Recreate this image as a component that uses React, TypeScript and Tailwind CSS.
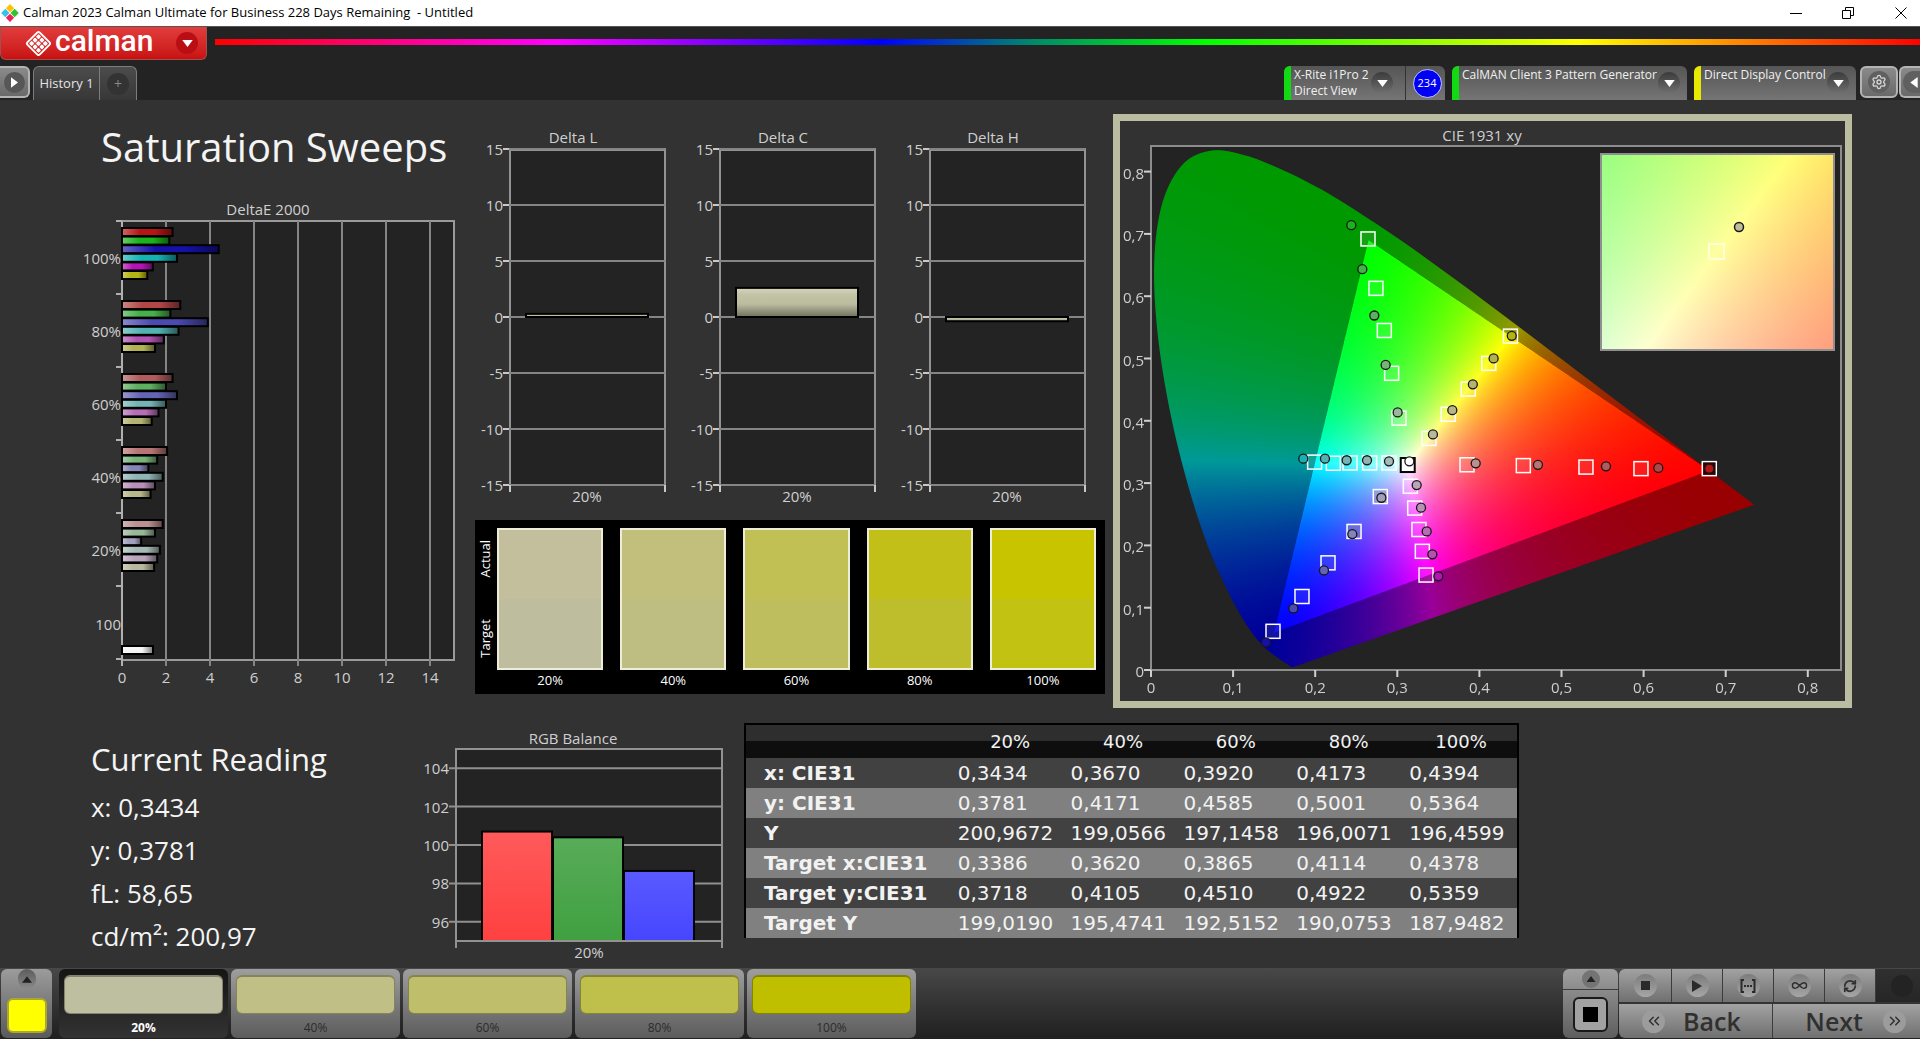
import { useEffect, useRef } from 'react';
import type { ReactNode } from 'react';
import { ChevronsLeft, ChevronsRight, Infinity as InfinityIcon, RefreshCw, Settings } from 'lucide-react';

const levels = ['20%', '40%', '60%', '80%', '100%'];

const deltaE = [
  {
    label: '100%',
    values: [2.3, 2.15, 4.4, 2.5, 1.4, 1.15],
    colors: ['#b81414', '#1cb41c', '#1410a8', '#14b4b4', '#b414b4', '#b4b414'],
  },
  {
    label: '80%',
    values: [2.65, 2.2, 3.9, 2.57, 1.9, 1.5],
    colors: ['#b04646', '#46b04c', '#4a4ab0', '#52b2b2', '#b252b2', '#b2b252'],
  },
  {
    label: '60%',
    values: [2.3, 2.0, 2.5, 2.0, 1.66, 1.35],
    colors: ['#b05c5c', '#5cb060', '#6464b4', '#74b4b4', '#b66eb6', '#b4b470'],
  },
  {
    label: '40%',
    values: [2.05, 1.6, 1.2, 1.85, 1.5, 1.3],
    colors: ['#b87474', '#78b47a', '#8484b8', '#90b4b4', '#b890b8', '#b6b68a'],
  },
  {
    label: '20%',
    values: [1.85, 1.5, 0.87, 1.72, 1.6, 1.46],
    colors: ['#ba9090', '#98b89a', '#a0a0bc', '#a8bab8', '#baa4ba', '#b8b89c'],
  },
];

const deltas = [
  { title: 'Delta L', value: 0.28 },
  { title: 'Delta C', value: 2.6 },
  { title: 'Delta H', value: -0.38 },
];

const swatches = [
  { label: '20%', actual: '#c3be9b', target: '#bebe9f' },
  { label: '40%', actual: '#c1bf7b', target: '#bebe82' },
  { label: '60%', actual: '#c1c055', target: '#bebe5f' },
  { label: '80%', actual: '#c2c018', target: '#bebe2d' },
  { label: '100%', actual: '#c8c400', target: '#c2c212' },
];

const rgbBars = [
  { value: 100.7, from: '#ff5a5a', to: '#ff4040' },
  { value: 100.4, from: '#58ac58', to: '#40a040' },
  { value: 98.65, from: '#5a5aff', to: '#4646ff' },
];

const readings = ['x: 0,3434', 'y: 0,3781', 'fL: 58,65', 'cd/m²: 200,97'];

const tableRows = [
  { label: 'x: CIE31', values: ['0,3434', '0,3670', '0,3920', '0,4173', '0,4394'] },
  { label: 'y: CIE31', values: ['0,3781', '0,4171', '0,4585', '0,5001', '0,5364'] },
  { label: 'Y', values: ['200,9672', '199,0566', '197,1458', '196,0071', '196,4599'] },
  { label: 'Target x:CIE31', values: ['0,3386', '0,3620', '0,3865', '0,4114', '0,4378'] },
  { label: 'Target y:CIE31', values: ['0,3718', '0,4105', '0,4510', '0,4922', '0,5359'] },
  { label: 'Target Y', values: ['199,0190', '195,4741', '192,5152', '190,0753', '187,9482'] },
];

const levelTiles = ['#bebfa1', '#bfbf86', '#bfbf6b', '#bfbf4b', '#bfbf00'];

type Point = [number, number];

// each sweep runs from 100% down to 20% saturation
const sweeps: { color: number; targets: Point[]; actual: Point[] }[] = [
  {
    color: 0,
    targets: [[0.68, 0.3232], [0.5968, 0.3232], [0.5298, 0.3257], [0.4535, 0.3281], [0.3849, 0.3294]],
    actual: [[0.68, 0.3232], [0.6179, 0.3244], [0.5542, 0.3269], [0.4713, 0.3294], [0.3955, 0.3318]],
  },
  {
    color: 1,
    targets: [[0.2643, 0.6919], [0.274, 0.6126], [0.2842, 0.545], [0.2931, 0.4762], [0.3021, 0.4043]],
    actual: [[0.244, 0.714], [0.2574, 0.6434], [0.272, 0.569], [0.2858, 0.4897], [0.3004, 0.4135]],
  },
  {
    color: 2,
    targets: [[0.1486, 0.0621], [0.1839, 0.118], [0.2156, 0.172], [0.2473, 0.2224], [0.2793, 0.2784]],
    actual: [[0.1401, 0.0442], [0.1734, 0.0989], [0.2107, 0.1598], [0.2452, 0.2181], [0.2806, 0.2765]],
  },
  {
    color: 3,
    targets: [[0.1993, 0.3337], [0.2221, 0.3318], [0.2424, 0.3324], [0.2663, 0.3324], [0.2899, 0.3324]],
    actual: [[0.1855, 0.3392], [0.2119, 0.3392], [0.2383, 0.3367], [0.2631, 0.3367], [0.2899, 0.3349]],
  },
  {
    color: 4,
    targets: [[0.335, 0.1524], [0.3305, 0.1905], [0.3264, 0.2255], [0.3212, 0.2599], [0.3159, 0.295]],
    actual: [[0.35, 0.1505], [0.3427, 0.1856], [0.3358, 0.2224], [0.3289, 0.2605], [0.3236, 0.2968]],
  },
  {
    color: 5,
    targets: [[0.4378, 0.5359], [0.4114, 0.4922], [0.3865, 0.451], [0.362, 0.4105], [0.3386, 0.3718]],
    actual: [[0.4394, 0.5364], [0.4173, 0.5001], [0.392, 0.4585], [0.367, 0.4171], [0.3434, 0.3781]],
  },
];

const locus: Point[] = [
  [0.1741, 0.005], [0.1714, 0.0051], [0.1644, 0.0109], [0.1566, 0.0177], [0.144, 0.0297], [0.1355, 0.0399],
  [0.1241, 0.0578], [0.1096, 0.0868], [0.0913, 0.1327], [0.0687, 0.2007], [0.0454, 0.295], [0.0235, 0.4127],
  [0.0082, 0.5384], [0.0039, 0.6548], [0.0139, 0.7502], [0.0389, 0.812], [0.0743, 0.8338], [0.1142, 0.8262],
  [0.1547, 0.8059], [0.1929, 0.7816], [0.2296, 0.7543], [0.3016, 0.6923], [0.3731, 0.6245], [0.4441, 0.5547],
  [0.5125, 0.4866], [0.5752, 0.4242], [0.627, 0.3725], [0.6658, 0.334], [0.6915, 0.3083], [0.719, 0.2809],
  [0.7347, 0.2653],
];

// chromaticity to P3 RGB, scaled to full brightness; colours outside the gamut are dimmed
const colorAt = (x: number, y: number) => {
  const X = x / y;
  const Z = (1 - x - y) / y;
  const rgb = [
    2.4935 * X - 0.9314 - 0.4027 * Z,
    -0.8295 * X + 1.7627 + 0.0236 * Z,
    0.0358 * X - 0.0762 + 0.9569 * Z,
  ];
  const max = Math.max(...rgb);
  const level = Math.min(...rgb) < 0 ? 153 : 255;
  return rgb.map((v) => Math.pow(Math.max(v, 0) / max, 1.25) * level);
};

type GamutProps = { width: number; height: number; x0: number; x1: number; y0: number; y1: number; clip?: boolean };

const GamutCanvas = ({ width, height, x0, x1, y0, y1, clip }: GamutProps) => {
  const ref = useRef<HTMLCanvasElement>(null);

  useEffect(() => {
    const ctx = ref.current?.getContext('2d');
    if (!ctx) return;
    const image = ctx.createImageData(width, height);
    for (let j = 0; j < height; j++) {
      for (let i = 0; i < width; i++) {
        const x = x0 + ((x1 - x0) * (i + 0.5)) / width;
        const y = y1 - ((y1 - y0) * (j + 0.5)) / height;
        const [r, g, b] = colorAt(x, y);
        image.data.set([r, g, b, 255], (j * width + i) * 4);
      }
    }
    ctx.putImageData(image, 0, 0);
    if (!clip) return;

    const px = ([x, y]: Point): Point => [
      ((x - x0) / (x1 - x0)) * width,
      ((y1 - y) / (y1 - y0)) * height,
    ];
    ctx.globalCompositeOperation = 'destination-in';
    ctx.beginPath();
    ctx.moveTo(...px(locus[0]));
    for (let i = 0; i < locus.length - 1; i++) {
      // Catmull-Rom segment written as a cubic
      const [ax, ay] = px(locus[Math.max(i - 1, 0)]);
      const [bx, by] = px(locus[i]);
      const [cx, cy] = px(locus[i + 1]);
      const [dx, dy] = px(locus[Math.min(i + 2, locus.length - 1)]);
      ctx.bezierCurveTo(bx + (cx - ax) / 6, by + (cy - ay) / 6, cx - (dx - bx) / 6, cy - (dy - by) / 6, cx, cy);
    }
    ctx.closePath();
    ctx.fill();
    ctx.globalCompositeOperation = 'source-over';
  }, [width, height, x0, x1, y0, y1, clip]);

  return <canvas ref={ref} width={width} height={height} className="block w-full h-full" />;
};

const chartText = 'fill-[#cfcfcf] text-[15px]';

const DeltaEChart = () => {
  const left = 42;
  const top = 21;
  const unit = 22;
  const group = 73;
  return (
    <svg viewBox="0 0 380 490" className="block w-full h-auto">
      <defs>
        <linearGradient id="barShade" x1="0" x2="1" y1="0" y2="0">
          <stop offset="0" stopColor="#fff" stopOpacity="0.35" />
          <stop offset="0.35" stopColor="#fff" stopOpacity="0" />
          <stop offset="0.65" stopColor="#000" stopOpacity="0" />
          <stop offset="1" stopColor="#000" stopOpacity="0.5" />
        </linearGradient>
      </defs>
      <text x="188" y="15" textAnchor="middle" className={chartText}>DeltaE 2000</text>
      <rect x={left} y={top} width={332} height={439} fill="#232323" stroke="#9a9a9a" strokeWidth="2" />
      {[2, 4, 6, 8, 10, 12, 14].map((v) => (
        <line key={v} x1={left + v * unit} x2={left + v * unit} y1={top} y2={466} stroke="#858585" strokeWidth="2" />
      ))}
      <line x1={left} x2={left} y1={top} y2={466} stroke="#b0b0b0" strokeWidth="2" />
      {[0, 1, 2, 3, 4, 5, 6].map((i) => (
        <line key={i} x1={left - 6} x2={left} y1={top + i * group} y2={top + i * group} stroke="#b0b0b0" strokeWidth="2" />
      ))}
      {[0, 2, 4, 6, 8, 10, 12, 14].map((v) => (
        <text key={v} x={left + v * unit} y="483" textAnchor="middle" className={chartText}>{v}</text>
      ))}
      {deltaE.map((g, i) => (
        <g key={g.label}>
          <text x={left - 1} y={top + i * group + 43} textAnchor="end" className={chartText}>{g.label}</text>
          {g.values.map((v, j) => {
            const y = top + i * group + 7 + j * 8.6;
            return (
              <g key={j}>
                <rect x={left} y={y} width={v * unit} height={8} fill={g.colors[j]} />
                <rect x={left} y={y} width={v * unit} height={8} fill="url(#barShade)" stroke="#000" strokeWidth="2" />
              </g>
            );
          })}
        </g>
      ))}
      <text x={left - 1} y={top + 5 * group + 44} textAnchor="end" className={chartText}>100</text>
      <rect x={left} y={446} width={31} height={8} fill="#f6f6f6" />
      <rect x={left} y={446} width={31} height={8} fill="url(#barShade)" stroke="#000" strokeWidth="2" />
    </svg>
  );
};

const DeltaChart = ({ title, value }: { title: string; value: number }) => {
  const left = 35;
  const yOf = (v: number) => 190 - v * 11.2;
  return (
    <svg viewBox="0 0 210 384" className="block w-full h-auto">
      <defs>
        <linearGradient id="deltaShade" x1="0" x2="0" y1="0" y2="1">
          <stop offset="0" stopColor="#d4d5bc" />
          <stop offset="0.25" stopColor="#c2c3a4" />
          <stop offset="0.55" stopColor="#bcbda0" />
          <stop offset="1" stopColor="#6f705e" />
        </linearGradient>
      </defs>
      <text x="98" y="16" textAnchor="middle" className={chartText}>{title}</text>
      <rect x={left} y={22} width={155} height={336} fill="#232323" stroke="#929292" strokeWidth="2" />
      <rect x={left - 1} y={21} width={157} height={3} fill="#929292" />
      {[15, 10, 5, 0, -5, -10, -15].map((v) => (
        <g key={v}>
          <line x1={left - 7} x2={left + 155} y1={yOf(v)} y2={yOf(v)} stroke="#858585" strokeWidth="2" />
          <line x1={left - 7} x2={left - 1} y1={yOf(v)} y2={yOf(v)} stroke="#c8c8c8" strokeWidth="2" />
          <text x={left - 7} y={yOf(v) + 6} textAnchor="end" className={chartText}>{v}</text>
        </g>
      ))}
      <path d="M35 358v7M190 358v7" stroke="#c8c8c8" strokeWidth="2" />
      <rect
        x={left + 16}
        y={Math.min(yOf(value), yOf(0))}
        width={122}
        height={Math.abs(value) * 11.2}
        fill="url(#deltaShade)"
        stroke="#000"
        strokeWidth="2"
      />
      <text x="112" y="375" textAnchor="middle" className={chartText}>20%</text>
    </svg>
  );
};

const RgbBalance = () => {
  const left = 41;
  const yOf = (v: number) => 210 - (v - 95) * 19.2;
  return (
    <svg viewBox="0 0 329 235" className="block w-full h-auto">
      <defs>
        {rgbBars.map((b, i) => (
          <linearGradient key={i} id={`rgb${i}`} x1="0" x2="0" y1="0" y2="1">
            <stop offset="0" stopColor={b.from} />
            <stop offset="1" stopColor={b.to} />
          </linearGradient>
        ))}
      </defs>
      <text x="158" y="13" textAnchor="middle" className={chartText}>RGB Balance</text>
      <rect x={left} y={18} width={266} height={192} fill="#232323" stroke="#929292" strokeWidth="2" />
      {[104, 102, 100, 98, 96].map((v) => (
        <g key={v}>
          <line x1={left - 7} x2={left + 266} y1={yOf(v)} y2={yOf(v)} stroke="#909090" strokeWidth="2" />
          <text x={left - 7} y={yOf(v) + 6} textAnchor="end" className={chartText}>{v}</text>
        </g>
      ))}
      {rgbBars.map((b, i) => (
        <rect
          key={i}
          x={left + 26 + i * 71}
          y={yOf(b.value)}
          width={70}
          height={210 - yOf(b.value)}
          fill={`url(#rgb${i})`}
          stroke="#000"
          strokeWidth="2"
        />
      ))}
      <path d="M41 217V18M307 217V18M40 210h268" stroke="#929292" strokeWidth="2" />
      <text x="174" y="227" textAnchor="middle" className={chartText}>20%</text>
    </svg>
  );
};

const CieChart = () => {
  const left = 31;
  const bottom = 549;
  const xOf = (x: number) => left + x * 821;
  const yOf = (y: number) => bottom - y * 623;
  return (
    <svg viewBox="0 0 725 580" className="block w-full h-auto">
      <text x="362" y="20" textAnchor="middle" className={chartText}>CIE 1931 xy</text>
      <rect x={left} y={25} width={690} height={524} fill="#232323" />
      <foreignObject x={left} y={25} width={690} height={524}>
        <GamutCanvas width={1380} height={1048} x0={0} x1={690 / 821} y0={0} y1={524 / 623} clip />
      </foreignObject>
      <rect x={left} y={25} width={690} height={524} fill="none" stroke="#8c8c8c" strokeWidth="2" />
      {[0, 1, 2, 3, 4, 5, 6, 7, 8].map((n) => {
        const label = n === 0 ? '0' : `0,${n}`;
        return (
          <g key={n} stroke="none">
            <rect x={xOf(n / 10) - 1} y={bottom} width={2} height={7} fill="#cfcfcf" />
            <rect x={left - 7} y={yOf(n / 10) - 1} width={7} height={2} fill="#cfcfcf" />
            <text x={xOf(n / 10)} y={572} textAnchor="middle" className={chartText}>{label}</text>
            <text x={left - 7} y={yOf(n / 10) + 7} textAnchor="end" className={chartText}>{label}</text>
          </g>
        );
      })}
      {sweeps.map((s) =>
        s.targets.map(([x, y], i) => (
          <rect
            key={`${s.color}-${i}`}
            x={xOf(x) - 7}
            y={yOf(y) - 7}
            width={14}
            height={14}
            fill={s.color === 2 && i > 2 ? deltaE[i].colors[2] : '#fff'}
            fillOpacity={s.color === 2 && i > 2 ? 0.5 : 0.08}
            stroke="#fff"
            strokeWidth="1.5"
          />
        ))
      )}
      <rect x={xOf(0.68) - 6} y={yOf(0.3232) - 6} width={12} height={12} fill="#300000" />
      <rect x={xOf(0.3127) - 7} y={yOf(0.329) - 7} width={14} height={14} fill="#fff" stroke="#000" strokeWidth="2" />
      {sweeps.map((s) =>
        s.actual.map(([x, y], i) => (
          <circle
            key={`${s.color}-${i}`}
            cx={xOf(x)}
            cy={yOf(y)}
            r={4.5}
            fill={deltaE[i].colors[s.color]}
            stroke="#181818"
            strokeWidth="1.3"
          />
        ))
      )}
      <circle cx={xOf(0.3147)} cy={yOf(0.3349)} r={4.5} fill="#fff" stroke="#181818" strokeWidth="1.3" />

      {/* magnified view round the current reading */}
      <foreignObject x={482} y={34} width={232} height={195}>
        <GamutCanvas width={466} height={392} x0={0.3143} x1={0.3629} y0={0.3466} y1={0.397} />
      </foreignObject>
      <rect x={481} y={33} width={233} height={196} fill="none" stroke="#8f8f8f" strokeWidth="2" />
      <rect x={589} y={123} width={15} height={15} fill="none" stroke="#ffffd8" strokeWidth="2" />
      <circle cx={619} cy={106} r={4.5} fill="#bebe9f" stroke="#181818" strokeWidth="1.5" />
    </svg>
  );
};

const ArrowCircle = () => (
  <span className="flex items-center justify-center w-[22px] h-[22px] shrink-0 rounded-full bg-linear-to-b from-[#3c3c3c] to-[#707070]">
    <svg viewBox="0 0 12 8" className="w-[11px] h-[7px]"><path d="M0 0h12L6 8z" fill="#fff" /></svg>
  </span>
);

const SourceMenu = ({ lines, strip, className }: { lines: string[]; strip: string; className: string }) => (
  <button
    className={`flex h-[34px] overflow-hidden rounded-t-md bg-linear-to-b from-[#555] to-[#757575] text-left text-[#f0f0f0] text-[12px] leading-4 ${className}`}
  >
    <span className={`w-[7px] h-full shrink-0 ${strip}`} />
    <span className="flex-1 pl-[3px] pt-px whitespace-nowrap">
      {lines.map((l) => <span key={l} className="block">{l}</span>)}
    </span>
    <span className="self-center"><ArrowCircle /></span>
  </button>
);

const RoundButton = ({ label, className, children }: { label: string; className?: string; children?: ReactNode }) => (
  <button
    aria-label={label}
    className={`flex items-center justify-center h-[33px] bg-linear-to-b from-[#a2a2a2] to-[#707070] border-r border-[#3c3c3c] ${className ?? 'w-[51px]'}`}
  >
    <span className="flex items-center justify-center w-[23px] h-[23px] rounded-full bg-linear-to-b from-[#7c7c7c] to-[#a6a6a6] text-[#303030]">
      {children}
    </span>
  </button>
);

const TitleBar = () => (
  <div className="flex items-center h-[26px] bg-white text-black text-[13px] pl-px">
    <svg viewBox="0 0 20 20" className="w-[18px] h-[18px] mr-1">
      <path d="M10 0l4.6 4.6L10 9.200 5.400 4.600z" fill="#ffc400" />
      <path d="M4.800 5.400l4.600 4.600-4.600 4.600L.2 10z" fill="#35c0ee" />
      <path d="M15.200 5.400l4.600 4.600-4.600 4.600L10.600 10z" fill="#2fc42f" />
      <path d="M10 10.800l4.600 4.600L10 20l-4.600-4.600z" fill="#ec2258" />
    </svg>
    <span className="whitespace-pre">Calman 2023 Calman Ultimate for Business 228 Days Remaining  - Untitled</span>
    <div className="ml-auto flex">
      <button aria-label="Minimize" className="flex items-center justify-center w-[52px] h-[26px]">
        <svg viewBox="0 0 12 12" className="w-3 h-3"><path d="M0 6.500h12" stroke="#000" /></svg>
      </button>
      <button aria-label="Restore" className="flex items-center justify-center w-[52px] h-[26px]">
        <svg viewBox="0 0 12 12" className="w-3 h-3">
          <path d="M.5 3.500h8v8h-8zM3.500 3.500v-3h8v8h-3" fill="none" stroke="#000" />
        </svg>
      </button>
      <button aria-label="Close" className="flex items-center justify-center w-[46px] h-[26px] pl-[8px]">
        <svg viewBox="0 0 12 12" className="w-3 h-3"><path d="M.5.5l11 11M11.500.5l-11 11" stroke="#000" /></svg>
      </button>
    </div>
  </div>
);

const Header = () => (
  <header className="bg-[#232323] h-[74px] flex flex-col justify-between border-t border-[#555]">
    <div className="flex">
      <button
        aria-label="Calman menu"
        className="flex items-center w-[207px] h-[33px] pl-[24px] rounded-b-md border border-t-0 border-[#a05050] bg-linear-to-b from-[#e23c3c] to-[#c81010] text-white"
      >
        <svg viewBox="0 0 28 28" className="w-[27px] h-[27px]">
          <g transform="rotate(45 14 14)">
            <rect x="5" y="5" width="18" height="18" rx="2" fill="none" stroke="#fff" strokeWidth="2" />
            {[7, 12, 17].map((x) =>
              [7, 12, 17].map((y) => <rect key={`${x}${y}`} x={x} y={y} width="4" height="4" rx="1" fill="#fff" />)
            )}
          </g>
        </svg>
        <span className="ml-[3px] font-[Roboto] font-medium text-[30px] leading-[30px] pb-1">calman</span>
        <span className="ml-auto mr-[8px] flex items-center justify-center w-[22px] h-[22px] rounded-full bg-[#b90f14]">
          <svg viewBox="0 0 12 8" className="w-[11px] h-[7px]"><path d="M0 0h12L6 8z" fill="#fff" /></svg>
        </span>
      </button>
      <div className="flex-1 ml-2 mt-[12px] h-[6px] bg-[linear-gradient(to_right,#f00_0%,#f0f_20%,#00f_39%,#008a6a_48%,#0f0_58%,#ff0_80%,#f00_100%)]" />
    </div>
    <div className="flex items-start">
      <button
        aria-label="Show side panel"
        className="flex items-center justify-center w-[30px] h-[32px] rounded-r-md border-2 border-l-0 border-[#b4b4b4] bg-linear-to-b from-[#8a8a8a] to-[#6a6a6a]"
      >
        <span className="flex items-center justify-center w-[21px] h-[21px] rounded-full bg-[#575757]">
          <svg viewBox="0 0 8 12" className="w-[7px] h-[11px]"><path d="M0 0v12l8-6z" fill="#fff" /></svg>
        </span>
      </button>
      <div className="flex ml-[3px] h-[34px] rounded-t-md border border-b-0 border-[#7d7d7d] bg-linear-to-b from-[#4c4c4c] to-[#373737]">
        <button className="w-[66px] border-r border-[#7d7d7d] text-[#e4e4e4] text-[13px] whitespace-nowrap">History 1</button>
        <button aria-label="Add history" className="flex items-center justify-center w-[36px]">
          <span className="flex items-center justify-center w-[22px] h-[22px] rounded-full bg-[#333] text-[#8a8a8a] text-[14px]">+</span>
        </button>
      </div>
      <div className="ml-auto flex">
        <div className="flex">
          <SourceMenu
            lines={['X-Rite i1Pro 2', 'Direct View']}
            strip="bg-[#12da12]"
            className="w-[121px] pr-[12px] rounded-tr-none"
          />
          <div className="flex items-center justify-center w-[40px] h-[34px] pl-[3px] rounded-tr-md border-l border-[#333] bg-linear-to-b from-[#555] to-[#757575]">
            <span className="flex items-center justify-center w-[29px] h-[29px] rounded-full border border-[#c8c8ff] bg-[#0000f5] text-white text-[11px]">
              234
            </span>
          </div>
        </div>
        <SourceMenu lines={['CalMAN Client 3 Pattern Generator']} strip="bg-[#12da12]" className="ml-[7px] w-[235px] pr-[7px]" />
        <SourceMenu lines={['Direct Display Control']} strip="bg-[#e8e800]" className="ml-[7px] w-[162px] pr-[7px]" />
        <button
          aria-label="Settings"
          className="flex items-center justify-center ml-1 w-[38px] h-[32px] rounded-md border-2 border-[#b4b4b4] bg-linear-to-b from-[#8a8a8a] to-[#6a6a6a]"
        >
          <span className="flex items-center justify-center w-[22px] h-[22px] rounded-full bg-[#606060]">
            <Settings size={16} strokeWidth={2} className="text-[#d6d6d6]" />
          </span>
        </button>
        <button
          aria-label="Show tools panel"
          className="flex items-center justify-end ml-px w-[21px] h-[32px] rounded-l-md border-2 border-r-0 border-[#b4b4b4] bg-linear-to-b from-[#8a8a8a] to-[#6a6a6a]"
        >
          <span className="flex items-center justify-end w-[17px] h-[22px] rounded-l-full bg-[#606060]">
            <svg viewBox="0 0 8 12" className="w-[8px] h-[11px] mr-[2px]"><path d="M8 0v12L0 6z" fill="#fff" /></svg>
          </span>
        </button>
      </div>
    </div>
  </header>
);

const SwatchPanel = () => (
  <div className="flex h-[174px] pt-2 pr-[9px] bg-black text-white text-[13px]">
    <div className="flex flex-col items-center justify-between w-[22px] h-[142px] pt-[12px] pb-[12px]">
      {['Actual', 'Target'].map((t) => (
        <span key={t} className="[writing-mode:vertical-rl] rotate-180">{t}</span>
      ))}
    </div>
    <div className="flex-1 grid grid-cols-5 gap-x-[17px]">
      {swatches.map((s) => (
        <div key={s.label}>
          <div className="h-[142px] border-2 border-[#eeeed8]">
            <div className="h-1/2" style={{ backgroundColor: s.actual }} />
            <div className="h-1/2" style={{ backgroundColor: s.target }} />
          </div>
          <p className="text-center leading-5">{s.label}</p>
        </div>
      ))}
    </div>
  </div>
);

const ReadingTable = () => (
  <table className="w-full table-fixed border-collapse border-2 border-b-0 border-black text-[#f2f2f2] font-['DejaVu_Sans',sans-serif]">
    <colgroup>
      <col className="w-[27%]" />
      <col /><col /><col /><col /><col />
    </colgroup>
    <thead>
      <tr className="h-[34px] bg-linear-to-b from-[#2e2e2e] from-50% to-[#0e0e0e] to-50% text-[18px] leading-6">
        <td />
        {levels.map((l) => <th key={l} scope="col" className="font-normal">{l}</th>)}
      </tr>
    </thead>
    <tbody>
      {tableRows.map((r) => (
        <tr key={r.label} className="h-[30px] odd:bg-[#414141] even:bg-[#808080] text-[20px] leading-6">
          <th scope="row" className="pl-[18px] text-left font-bold whitespace-nowrap">{r.label}</th>
          {r.values.map((v, i) => <td key={i} className="pl-1">{v}</td>)}
        </tr>
      ))}
    </tbody>
  </table>
);

const Footer = () => (
  <footer className="flex items-start h-[71px] pt-px bg-linear-to-b from-[#484848] to-[#202020] text-[12px]">
    <div className="ml-px flex flex-col items-center justify-between w-[51px] h-[69px] pb-[5px] rounded-md bg-linear-to-b from-[#9c9c9c] to-[#5a5a5a]">
      <button aria-label="Expand colours" className="flex items-center justify-center w-[18px] h-[20px] rounded-full bg-linear-to-b from-[#5c5c5c] to-[#8a8a8a]">
        <svg viewBox="0 0 12 8" className="w-[10px] h-[7px]"><path d="M0 8h12L6 0z" fill="#222" /></svg>
      </button>
      <button aria-label="Yellow" className="w-[40px] h-[35px] rounded-md border-2 border-[#a8a832] bg-[#ffff00]" />
    </div>
    <div className="flex ml-[7px] gap-[3px]">
      {levels.map((l, i) => (
        <button
          key={l}
          className={`flex flex-col items-center w-[169px] h-[69px] pt-[6px] rounded-md ${
            i === 0
              ? 'bg-linear-to-b from-[#151515] to-[#333] text-white font-bold'
              : 'bg-linear-to-b from-[#9e9e9e] to-[#5c5c5c] text-[#2c2c2c]'
          }`}
        >
          <span
            className="w-[159px] h-[42px] rounded-md border border-black/30 border-t-2"
            style={{ backgroundColor: levelTiles[i] }}
          />
          <span className="mt-1 leading-5">{l}</span>
        </button>
      ))}
    </div>
    <div className="ml-auto flex">
      <div className="w-[55px] h-[69px] rounded-md overflow-hidden bg-linear-to-b from-[#a0a0a0] to-[#5e5e5e]">
        <button aria-label="Expand actions" className="flex items-center justify-center w-full h-[21px] border-b border-[#3c3c3c]">
          <span className="flex items-center justify-center w-[18px] h-[18px] rounded-full bg-[#747474]">
            <svg viewBox="0 0 12 8" className="w-[10px] h-[6px]"><path d="M0 8h12L6 0z" fill="#222" /></svg>
          </span>
        </button>
        <button aria-label="Stop" className="flex items-center justify-center w-[35px] h-[35px] mx-auto mt-[7px] rounded-md border-2 border-[#1a1a1a] bg-[#a2a2a2]">
          <span className="w-[15px] h-[15px] bg-black" />
        </button>
      </div>
      <div className="flex flex-col ml-px w-[301px]">
        <div className="flex">
          <RoundButton label="Stop measurement" className="w-[53px] rounded-tl-md"><span className="w-[9px] h-[9px] bg-[#2a2a2a]" /></RoundButton>
          <RoundButton label="Measure"><svg viewBox="0 0 10 12" className="w-[10px] h-[12px]"><path d="M0 0v12l10-6z" fill="#2a2a2a" /></svg></RoundButton>
          <RoundButton label="Measure range">
            <svg viewBox="0 0 16 14" className="w-4 h-3.5" fill="none" stroke="#2a2a2a" strokeWidth="2">
              <path d="M4 1H1.500v12H4M12 1h2.500v12H12" />
              <path d="M4 7h8" strokeDasharray="2 1" />
            </svg>
          </RoundButton>
          <RoundButton label="Measure continuously"><InfinityIcon size={17} /></RoundButton>
          <RoundButton label="Repeat"><RefreshCw size={14} strokeWidth={3} /></RoundButton>
          <div className="flex items-center flex-1 pl-[15px] bg-linear-to-b from-[#303030] to-[#262626]">
            <span className="w-[22px] h-[22px] rounded-full bg-[#232323]" />
          </div>
        </div>
        <div className="flex mt-[2px] text-[#303030] text-[25px] font-semibold">
          <button className="flex items-center w-[154px] h-[34px] pl-[23px] rounded-bl-md border-r border-[#3c3c3c] bg-linear-to-b from-[#a2a2a2] to-[#707070]">
            <span className="flex items-center justify-center w-[23px] h-[23px] rounded-full bg-[#9c9c9c]"><ChevronsLeft size={18} /></span>
            <span className="ml-[18px] leading-8">Back</span>
          </button>
          <button className="flex items-center flex-1 h-[34px] pr-[14px] justify-end bg-linear-to-b from-[#a2a2a2] to-[#707070]">
            <span className="mr-[20px] leading-8">Next</span>
            <span className="flex items-center justify-center w-[23px] h-[23px] rounded-full bg-[#9c9c9c]"><ChevronsRight size={18} /></span>
          </button>
        </div>
      </div>
    </div>
  </footer>
);

const App = () => {
  return (
    <div className="min-h-screen flex flex-col bg-[#323232] font-['Open_Sans','Noto_Sans',sans-serif]">
      <TitleBar />
      <Header />
      <main className="flex-1">
        <div className="grid grid-cols-[475fr_630fr_747fr] items-start pt-[14px] pr-[68px]">
          <section className="pl-[80px] pr-[15px] pt-[6px]">
            <h1 className="pl-[21px] mb-[26px] text-[40px] leading-[54px] text-[#f4f4f4] whitespace-nowrap">Saturation Sweeps</h1>
            <DeltaEChart />
          </section>
          <section className="pt-[13px]">
            <div className="grid grid-cols-3 mb-[9px]">
              {deltas.map((d) => <DeltaChart key={d.title} {...d} />)}
            </div>
            <SwatchPanel />
          </section>
          <section className="ml-2 border-[7px] border-[#babd9f]">
            <CieChart />
          </section>
        </div>
        <div className="grid grid-cols-[415fr_329fr_775fr_401fr] items-start mt-[15px]">
          <section className="pl-[91px] pt-[13px] text-[#f4f4f4]">
            <h2 className="mb-[4px] text-[31px] leading-[46px] whitespace-nowrap">Current Reading</h2>
            {readings.map((r) => <p key={r} className="text-[26px] leading-[43px] whitespace-nowrap">{r}</p>)}
          </section>
          <div className="pt-[8px]">
            <RgbBalance />
          </div>
          <ReadingTable />
        </div>
      </main>
      <Footer />
    </div>
  );
};

export default App;
